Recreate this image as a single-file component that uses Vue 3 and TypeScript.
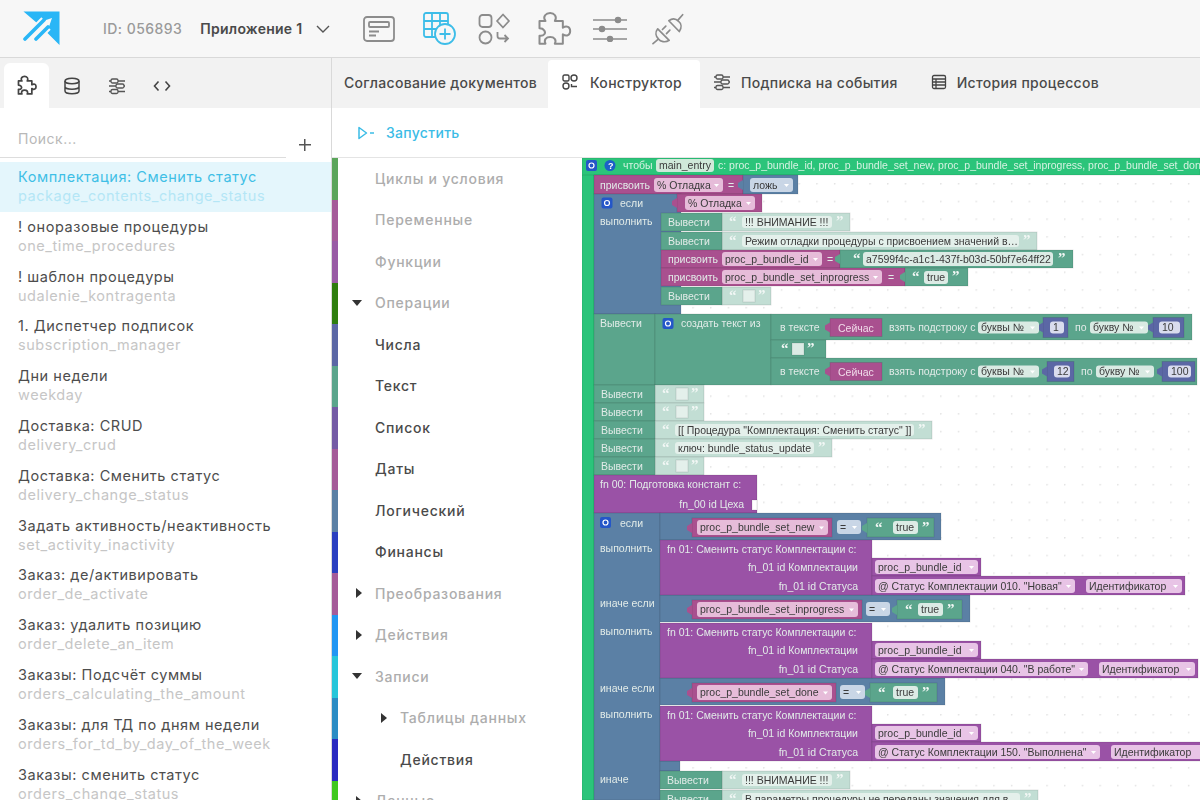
<script setup lang="ts">
type Box = { x: number; y: number; w: number; h: number; c: string }
type Field = { x: number; y: number; w: number; h: number; c: string; t: string; arrow: string }
type Label = { x: number; y: number; t: string; c: string; end?: boolean; q?: boolean }

const HAT = '#2bc47a', B = '#5b80a5', P = '#a9508f', T = '#5ba58c', F = '#9a52a6', N = '#5b67a5', L = '#c2ded4'
const W = '#e2ebe8'

const boxes: Box[] = []
const fields: Field[] = []
const labels: Label[] = []
const tabs: { x: number; y: number; c: string }[] = []

const box = (x: number, y: number, x2: number, y2: number, c: string) => boxes.push({ x, y, w: x2 - x, h: y2 - y, c })
const field = (x: number, y: number, x2: number, y2: number, c: string, t: string, arrow = '#ffffff') =>
  fields.push({ x, y, w: x2 - x, h: y2 - y, c, t, arrow })
const text = (x: number, y: number, t: string, c = W, end = false) => labels.push({ x, y, t, c, end })
const quote = (x: number, y: number, t: string) => labels.push({ x, y, t, c: '#f2f7f5', q: true })

// hat block and side rail
box(582, 158, 594, 800, HAT)
box(582, 158, 1200, 175, HAT)
text(623, 168.5, 'чтобы', '#d6f2e2')
field(656, 159, 714, 172, '#cfe9d9', 'main_entry', '')
text(718, 168.5, 'с: proc_p_bundle_id, proc_p_bundle_set_new, proc_p_bundle_set_inprogress, proc_p_bundle_set_done', '#d6f2e2')

// assign debug flag
box(594, 175, 743, 194, P)
box(743, 175, 798, 194, B)
tabs.push({ x: 743, y: 180, c: B })
text(600, 188.5, 'присвоить')
field(654, 178, 723, 192, '#e6bcd9', '% Отладка')
text(728, 188.5, '=')
field(750, 178, 793, 192, '#c9d6e6', 'ложь')

// if debug
box(594, 194, 681, 314, B)
box(677, 194, 762, 212, P)
tabs.push({ x: 677, y: 198, c: P })
text(620, 206.5, 'если')
field(685, 196, 755, 210, '#e6bcd9', '% Отладка')
text(600, 225, 'выполнить')

const vyv = (y: number, x2: number, t: string, x1 = 661, lx = 722) => {
  box(lx, y, x2, y + 18, L)
  box(x1, y, lx, y + 18, T)
  text(x1 + 7, y + 12.5, 'Вывести')
  quote(lx + 7, y + 13, '“')
  if (t) {
    field(lx + 20, y + 3, x2 - 18, y + 15, '#e4f0eb', t, '')
    quote(x2 - 14, y + 13, '”')
  } else {
    box(lx + 21, y + 3, lx + 33, y + 15, '#e4f0eb')
    quote(lx + 36, y + 13, '”')
  }
}
vyv(213, 850, '!!! ВНИМАНИЕ !!!')
vyv(232, 1037, 'Режим отладки процедуры с присвоением значений в…')
box(661, 250, 840, 268, P)
box(840, 250, 1073, 268, T)
tabs.push({ x: 840, y: 254, c: T })
text(668, 262.5, 'присвоить')
field(722, 252, 822, 266, '#e6bcd9', 'proc_p_bundle_id')
text(827, 262.5, '=')
quote(853, 263, '“')
field(863, 252, 1053, 266, '#dcebe5', 'a7599f4c-a1c1-437f-b03d-50bf7e64ff22', '')
quote(1058, 263, '”')
box(661, 268, 905, 286, P)
box(905, 268, 968, 286, T)
tabs.push({ x: 905, y: 272, c: T })
text(668, 280.5, 'присвоить')
field(722, 270, 882, 284, '#e6bcd9', 'proc_p_bundle_set_inprogress')
text(888, 280.5, '=')
quote(912, 281, '“')
field(924, 271, 948, 284, '#dcebe5', 'true', '')
quote(952, 281, '”')
vyv(287, 771, '')

// build text block
box(594, 314, 655, 385, T)
box(655, 314, 771, 385, T)
box(771, 314, 1192, 340, T)
box(771, 340, 826, 358, T)
box(771, 358, 1197, 385, T)
text(600, 327, 'Вывести')
text(681, 327, 'создать текст из')
const sub = (y: number, a: number, b: number, one: string, po: number, c: number, d: number, e: number, f: number, two: string) => {
  text(780, y + 3.5, 'в тексте')
  box(830, y - 9, 882, y + 9, P)
  tabs.push({ x: 830, y: y - 5, c: P })
  text(838, y + 4, 'Сейчас', '#f1dbea')
  text(889, y + 3.5, 'взять подстроку с')
  field(978, y - 6, 1039, y + 6, '#d9eae3', 'буквы №')
  box(a, y - 10, b, y + 10, N)
  tabs.push({ x: a, y: y - 5, c: N })
  field(a + 7, y - 6, b - 4, y + 6, '#d9dcee', one, '')
  text(po, y + 3.5, 'по')
  field(c, y - 6, d, y + 6, '#d9eae3', 'букву №')
  box(e, y - 10, f, y + 10, N)
  tabs.push({ x: e, y: y - 5, c: N })
  field(e + 6, y - 6, f - 4, y + 6, '#d9dcee', two, '')
}
sub(327.5, 1043, 1068, '1', 1075, 1090, 1148, 1153, 1184, '10')
sub(371.5, 1047, 1074, '12', 1081, 1096, 1154, 1162, 1195, '100')
quote(781, 353, '“')
box(792, 343, 804, 355, '#dcebe5')
quote(807, 353, '”')

vyv(385, 704, '', 594, 655)
vyv(403, 704, '', 594, 655)
vyv(421, 932, '[[ Процедура "Комплектация: Сменить статус" ]]', 594, 655)
vyv(439, 832, 'ключ: bundle_status_update', 594, 655)
vyv(457, 704, '', 594, 655)

box(594, 475, 757, 513, F)
text(600, 488, 'fn 00: Подготовка констант   с:')
text(744, 507.5, 'fn_00 id Цеха', W, true)
box(752, 500, 757, 510, '#ffffff')

// second if chain
box(594, 513, 660, 800, B)
box(660, 761, 680, 771, B)

const cond = (y: number, end: number, pend: number, name: string, e1: number, e2: number, g1: number, g2: number, t1: number) => {
  box(660, y, end, y + 27, B)
  box(692, y + 5, pend, y + 24, P)
  tabs.push({ x: 692, y: y + 10, c: P })
  field(697, y + 7, pend - 4, y + 22, '#e6bcd9', name)
  field(e1, y + 7, e2, y + 21, '#c9d6e6', '=')
  box(g1, y + 5, g2, y + 24, T)
  tabs.push({ x: g1, y: y + 10, c: T })
  quote(g1 + 8, y + 19, '“')
  field(t1, y + 8, t1 + 25, y + 21, '#dcebe5', 'true', '')
  quote(t1 + 29, y + 19, '”')
}
text(620, 526.5, 'если')
cond(513, 941, 832, 'proc_p_bundle_set_new', 837, 861, 867, 934, 893)
text(600, 606.5, 'иначе если')
cond(595, 970, 862, 'proc_p_bundle_set_inprogress', 866, 890, 897, 962, 918)
text(600, 692, 'иначе если')
cond(678, 945, 836, 'proc_p_bundle_set_done', 840, 865, 870, 937, 893)

const fn = (y: number, x3: number, status: string, sEnd: number, idA: number, idB: number) => {
  box(660, y, 872, y + 55, F)
  box(872, y + 18, 981, y + 36, F)
  box(872, y + 36, x3, y + 55, F)
  text(667, y + 12.5, 'fn 01: Сменить статус Комплектации   с:')
  text(858, y + 31, 'fn_01 id Комплектации', W, true)
  text(858, y + 49.5, 'fn_01 id Статуса', W, true)
  field(875, y + 20, 978, y + 34, '#e8c4e6', 'proc_p_bundle_id')
  field(875, y + 39, sEnd, y + 53, '#e8c4e6', status)
  field(idA, y + 39, idB, y + 53, '#e8c4e6', 'Идентификатор')
  text(600, y + 12, 'выполнить')
}
fn(540, 1185, '@ Статус Комплектации 010. "Новая"', 1075, 1086, 1182)
fn(623, 1198, '@ Статус Комплектации 040. "В работе"', 1088, 1099, 1195)
fn(706, 1210, '@ Статус Комплектации 150. "Выполнена"', 1100, 1111, 1212)

text(600, 783, 'иначе')
vyv(771, 850, '!!! ВНИМАНИЕ !!!', 660, 722)
vyv(790, 1038, 'В параметры процедуры не переданы значения для в…', 660, 722)

const list = [
  ['Комплектация: Сменить статус', 'package_contents_change_status'],
  ['! оноразовые процедуры', 'one_time_procedures'],
  ['! шаблон процедуры', 'udalenie_kontragenta'],
  ['1. Диспетчер подписок', 'subscription_manager'],
  ['Дни недели', 'weekday'],
  ['Доставка: CRUD', 'delivery_crud'],
  ['Доставка: Сменить статус', 'delivery_change_status'],
  ['Задать активность/неактивность', 'set_activity_inactivity'],
  ['Заказ: де/активировать', 'order_de_activate'],
  ['Заказ: удалить позицию', 'order_delete_an_item'],
  ['Заказы: Подсчёт суммы', 'orders_calculating_the_amount'],
  ['Заказы: для ТД по дням недели', 'orders_for_td_by_day_of_the_week'],
  ['Заказы: сменить статус', 'orders_change_status'],
]

const toolbox = [
  { t: 'Циклы и условия', c: '#5ba55b', leaf: false, caret: '', sub: false },
  { t: 'Переменные', c: '#a55b99', leaf: false, caret: '', sub: false },
  { t: 'Функции', c: '#995ba5', leaf: false, caret: '', sub: false },
  { t: 'Операции', c: '#2e7d0e', leaf: false, caret: 'down', sub: false },
  { t: 'Числа', c: '#5b67a5', leaf: true, caret: '', sub: false },
  { t: 'Текст', c: '#5ba58c', leaf: true, caret: '', sub: false },
  { t: 'Список', c: '#745ba5', leaf: true, caret: '', sub: false },
  { t: 'Даты', c: '#a55b99', leaf: true, caret: '', sub: false },
  { t: 'Логический', c: '#5b80a5', leaf: true, caret: '', sub: false },
  { t: 'Финансы', c: '#2a3fc0', leaf: true, caret: '', sub: false },
  { t: 'Преобразования', c: '#a55b99', leaf: false, caret: 'right', sub: false },
  { t: 'Действия', c: '#2196f3', leaf: false, caret: 'right', sub: false },
  { t: 'Записи', c: '#26c6da', leaf: false, caret: 'down', sub: false },
  { t: 'Таблицы данных', c: '#2b8cc4', leaf: false, caret: 'right', sub: true },
  { t: 'Действия', c: '#2a2ac0', leaf: true, caret: '', sub: true },
  { t: 'Данные', c: '#3fc81f', leaf: false, caret: 'right', sub: false },
]

const puzzle =
  'M616 62 C606 48 618 38 630 38 C642 38 652 48 644 62 H668 V82 C680 74 690 80 690 92 C690 104 680 110 668 102 V130 H644 C650 118 642 110 630 110 C618 110 610 118 616 130 H598 V106 C612 108 618 98 612 90 C608 84 604 84 598 84 V62 Z'
</script>

<template>
  <div class="app">
    <header class="top">
      <svg class="logo" viewBox="0 0 37 35" width="37" height="35">
        <path d="M0.500 0.500H36.500V34L24 21.500L29 7L14 12Z" fill="#29b6f6" />
        <path d="M2 28L21 9M13 28L25 16" stroke="#f7f7f7" stroke-width="7.500" />
        <path d="M2 28L21 9M13 28L25 16" stroke="#29b6f6" stroke-width="3.600" stroke-linecap="round" />
      </svg>
      <span class="app-id">ID: 056893</span>
      <span class="app-name">Приложение 1</span>
      <svg class="chev" viewBox="0 0 14 8" width="14" height="8"><path d="M1 1L7 7L13 1" fill="none" stroke="#555" stroke-width="1.400" /></svg>
      <div class="tools">
        <svg viewBox="0 0 32 26" width="32" height="26" fill="none" stroke="#8c8c8c" stroke-width="1.800">
          <rect x="1" y="1" width="30" height="24" rx="3" />
          <rect x="6" y="6" width="20" height="5" rx="1" />
          <path d="M6 15.500H16M6 19.500H13" />
        </svg>
        <svg viewBox="0 0 34 34" width="34" height="34" fill="none" stroke="#3dbde8" stroke-width="1.800">
          <rect x="2" y="1" width="24" height="24" rx="2" />
          <path d="M10 1V25M18 1V25M2 9H26M2 17H26" />
          <circle cx="23" cy="22" r="10" fill="#f7f7f7" />
          <path d="M23 16.500V27.500M17.500 22H28.500" />
        </svg>
        <svg viewBox="0 0 32 32" width="32" height="32" fill="none" stroke="#8c8c8c" stroke-width="1.800">
          <rect x="1.500" y="2" width="12" height="12" rx="3" />
          <path d="M25 1.500L31 8L25 14.500L19 8Z" stroke-linejoin="round" />
          <circle cx="7.500" cy="24.500" r="6" />
          <path d="M19.500 19V23C19.500 25 20.500 25.500 22 25.500H30M26.500 22L30 25.500L26.500 29" />
        </svg>
        <svg viewBox="585 32 110 108" width="37" height="36" fill="none" stroke="#8c8c8c" stroke-width="6" stroke-linejoin="round">
          <path :d="puzzle" />
        </svg>
        <svg viewBox="0 0 34 26" width="34" height="26" stroke="#8c8c8c" stroke-width="1.500">
          <path d="M0 4H34M0 13H34M0 23H34" />
          <circle cx="25" cy="4" r="2.500" fill="#8c8c8c" />
          <circle cx="9" cy="13" r="2.500" fill="#8c8c8c" />
          <circle cx="17" cy="23" r="2.500" fill="#8c8c8c" />
        </svg>
        <svg viewBox="25 15 95 95" width="32" height="32" fill="none" stroke="#8c8c8c" stroke-width="5" stroke-linejoin="round" stroke-linecap="round">
          <path d="M75 38L106 70C114 58 112 46 104 40C96 32 86 30 75 38Z" />
          <path d="M102 36L116 20" />
          <path d="M42 62L76 96C64 104 50 100 44 92C36 84 34 72 42 62Z" />
          <path d="M42 94L28 106" />
          <path d="M56 64L66 54M68 76L78 66" />
        </svg>
      </div>
    </header>

    <div class="main">
      <aside class="side">
        <nav class="side-tabs">
          <div class="side-tab active">
            <svg viewBox="585 32 110 108" width="21" height="21" fill="none" stroke="#444" stroke-width="9" stroke-linejoin="round"><path :d="puzzle" /></svg>
          </div>
          <div class="side-tab">
            <svg viewBox="0 0 18 18" width="18" height="18" fill="none" stroke="#444" stroke-width="1.500">
              <ellipse cx="9" cy="4" rx="7" ry="2.800" />
              <path d="M2 4V14C2 15.500 5 16.800 9 16.800S16 15.500 16 14V4M2 9.500C2 11 5 12.300 9 12.300S16 11 16 9.500" />
            </svg>
          </div>
          <div class="side-tab">
            <svg viewBox="0 0 18 18" width="18" height="18" fill="none" stroke="#555" stroke-width="1.300">
              <path d="M1 4H17M1 9H17M1 14.500H17" />
              <rect x="3" y="2" width="7" height="4" rx="1.500" fill="#f2f2f2" />
              <rect x="8" y="7" width="8" height="4" rx="1.500" fill="#f2f2f2" />
              <rect x="3" y="12.500" width="7" height="4" rx="1.500" fill="#f2f2f2" />
            </svg>
          </div>
          <div class="side-tab">
            <svg viewBox="0 0 18 12" width="18" height="12" fill="none" stroke="#444" stroke-width="1.600"><path d="M5.500 1.500L1.500 6L5.500 10.500M12.500 1.500L16.500 6L12.500 10.500" /></svg>
          </div>
        </nav>
        <div class="search">
          <span class="search-input">Поиск...</span>
          <span class="plus"></span>
        </div>
        <ul class="procs">
          <li v-for="(p, i) in list" :key="p[1]" class="proc" :class="{ sel: i === 0 }">
            <span class="proc-name">{{ p[0] }}</span>
            <span class="proc-code">{{ p[1] }}</span>
          </li>
        </ul>
      </aside>

      <section class="work">
        <nav class="tabs">
          <div class="tab first">Согласование документов</div>
          <div class="tab active">
            <svg viewBox="0 0 16 16" width="16" height="16" fill="none" stroke="#444" stroke-width="1.400">
              <rect x="1" y="1" width="6" height="6" rx="1.500" />
              <circle cx="12" cy="4" r="3" />
              <circle cx="4" cy="12" r="3" />
              <path d="M9.500 10V12.500H15" />
            </svg>
            Конструктор
          </div>
          <div class="tab events">
            <svg viewBox="0 0 18 18" width="18" height="18" fill="none" stroke="#555" stroke-width="1.300">
              <path d="M1 4H17M1 9H17M1 14.500H17" />
              <rect x="3" y="2" width="7" height="4" rx="1.500" fill="#f2f2f2" />
              <rect x="8" y="7" width="8" height="4" rx="1.500" fill="#f2f2f2" />
              <rect x="3" y="12.500" width="7" height="4" rx="1.500" fill="#f2f2f2" />
            </svg>
            Подписка на события
          </div>
          <div class="tab history">
            <svg viewBox="0 0 16 16" width="16" height="16" fill="none" stroke="#444" stroke-width="1.300">
              <rect x="1.500" y="1.500" width="13" height="13" rx="1.500" />
              <path d="M1.500 5H14.500M1.500 8H14.500M1.500 11H14.500M5 5V14.500" />
            </svg>
            История процессов
          </div>
        </nav>
        <div class="runbar">
          <svg viewBox="0 0 18 14" width="18" height="14" fill="none" stroke="#3bbce6" stroke-width="1.500">
            <path d="M2 1.500L9.500 7L2 12.500Z" stroke-linejoin="round" />
            <path d="M13 7H17" />
          </svg>
          <span>Запустить</span>
        </div>
        <div class="editor">
          <ul class="toolbox">
            <li v-for="(c, i) in toolbox" :key="i" class="cat" :class="{ leaf: c.leaf, nested: c.sub }" :style="{ borderLeftColor: c.c }">
              <i v-if="c.caret" class="caret" :class="c.caret"></i>
              {{ c.t }}
            </li>
          </ul>
          <svg class="canvas" viewBox="582 158 618 642" width="618" height="642">
            <defs>
              <pattern id="dots" x="887" y="183" width="17.700" height="17.700" patternUnits="userSpaceOnUse">
                <circle cx="0.800" cy="0.800" r="0.800" fill="#dcdcdc" />
              </pattern>
            </defs>
            <rect x="582" y="158" width="618" height="642" fill="url(#dots)" />
            <g class="shapes">
              <rect v-for="(b, i) in boxes" :key="'b' + i" :x="b.x" :y="b.y" :width="b.w" :height="b.h" :fill="b.c" stroke="#000" stroke-opacity="0.100" stroke-width="1" />
              <polygon v-for="(t, i) in tabs" :key="'t' + i" :points="`${t.x},${t.y} ${t.x - 5},${t.y + 3} ${t.x - 5},${t.y + 7} ${t.x},${t.y + 10}`" :fill="t.c" />
            </g>
            <rect x="586" y="160" width="11" height="11" rx="2" fill="#2456c8" />
            <circle cx="591.500" cy="165.500" r="2.500" fill="none" stroke="#fff" stroke-width="1.200" />
            <circle cx="610" cy="165.500" r="5.500" fill="#1c60c8" />
            <text x="608" y="168.500" class="tiny">?</text>
            <rect x="601.500" y="197.500" width="11" height="11" rx="2" fill="#2456c8" />
            <circle cx="607" cy="203" r="2.500" fill="none" stroke="#fff" stroke-width="1.200" />
            <rect x="662.500" y="318" width="11" height="11" rx="2" fill="#2456c8" />
            <circle cx="668" cy="323.500" r="2.500" fill="none" stroke="#fff" stroke-width="1.200" />
            <rect x="600" y="517" width="11" height="11" rx="2" fill="#2456c8" />
            <circle cx="605.500" cy="522.500" r="2.500" fill="none" stroke="#fff" stroke-width="1.200" />
            <g v-for="(f, i) in fields" :key="'f' + i">
              <rect :x="f.x" :y="f.y" :width="f.w" :height="f.h" rx="3" :fill="f.c" />
              <text :x="f.x + 3" :y="f.y + f.h / 2 + 3.500" class="fld">{{ f.t }}</text>
              <polygon v-if="f.arrow" :points="`${f.x + f.w - 9},${f.y + f.h / 2 - 1} ${f.x + f.w - 4},${f.y + f.h / 2 - 1} ${f.x + f.w - 6.500},${f.y + f.h / 2 + 2}`" :fill="f.arrow" />
            </g>
            <text v-for="(l, i) in labels" :key="'l' + i" :x="l.x" :y="l.y" :class="l.q ? 'qt' : 'lbl'" :fill="l.c" :text-anchor="l.end ? 'end' : 'start'">{{ l.t }}</text>
          </svg>
        </div>
      </section>
    </div>
  </div>
</template>

<style scoped>
.app {
  width: 1200px;
  height: 800px;
  overflow: hidden;
  background: #fff;
  font-family: Inter, "Noto Sans", sans-serif;
  color: #444;
  display: flex;
  flex-direction: column;
}
.top {
  height: 57px;
  flex: none;
  background: #f7f7f7;
  border-bottom: 1px solid #d9d9d9;
  display: flex;
  align-items: center;
  padding-left: 23px;
  box-sizing: content-box;
}
.logo { flex: none; }
.app-id {
  margin-left: 43px;
  font-size: 14px;
  letter-spacing: 0.45px;
  color: #9a9a9a;
  font-weight: 500;
}
.app-name {
  margin-left: 18px;
  font-size: 14px;
  font-weight: 600;
  letter-spacing: 0.25px;
  color: #4a4a4a;
}
.chev { margin-left: 14px; }
.tools {
  margin-left: 33px;
  display: flex;
  align-items: center;
}
.tools svg:nth-child(2) { margin-left: 27px; }
.tools svg:nth-child(3) { margin-left: 22px; }
.tools svg:nth-child(4) { margin-left: 25px; }
.tools svg:nth-child(5) { margin-left: 21px; }
.tools svg:nth-child(6) { margin-left: 25px; }
.main {
  flex: 1;
  display: flex;
  min-height: 0;
}
.side {
  width: 331px;
  flex: none;
  border-right: 1px solid #d9d9d9;
  display: flex;
  flex-direction: column;
  overflow: hidden;
}
.side-tabs {
  height: 50px;
  flex: none;
  background: #f2f2f2;
  display: flex;
  padding: 5px 0 0 4px;
  box-sizing: border-box;
}
.side-tab {
  width: 45px;
  display: flex;
  align-items: center;
  justify-content: center;
  border-radius: 6px 6px 0 0;
}
.side-tab.active { background: #fff; }
.search {
  height: 54px;
  flex: none;
  display: flex;
  position: relative;
}
.search-input {
  width: 286px;
  height: 50px;
  box-sizing: border-box;
  padding: 22px 0 0 18px;
  border-bottom: 1px solid #ddd;
  font-size: 14px;
  color: #b8b8b8;
  line-height: 17px;
  letter-spacing: 0.5px;
}
.plus {
  position: absolute;
  left: 299px;
  top: 31px;
  width: 12px;
  height: 12px;
  background:
    linear-gradient(#555, #555) center / 12px 1.500px no-repeat,
    linear-gradient(#555, #555) center / 1.500px 12px no-repeat;
}
.procs {
  list-style: none;
  margin: 0;
  padding: 0;
}
.proc {
  height: 49.800px;
  box-sizing: border-box;
  padding: 6px 18px 0;
  display: flex;
  flex-direction: column;
}
.proc.sel { background: #e4f6fc; }
.proc-name {
  font-size: 14.500px;
  line-height: 18px;
  letter-spacing: 0.55px;
  color: #4d4d4d;
  white-space: nowrap;
}
.proc-code {
  font-size: 14.500px;
  line-height: 18px;
  margin-top: 1px;
  letter-spacing: 0.55px;
  color: #c6c6c6;
  white-space: nowrap;
}
.sel .proc-name { color: #3fbfe6; }
.sel .proc-code { color: #b4e6f6; }
.work {
  flex: 1;
  min-width: 0;
  display: flex;
  flex-direction: column;
}
.tabs {
  height: 50px;
  flex: none;
  background: #f2f2f2;
  display: flex;
  font-size: 14px;
  letter-spacing: 0.3px;
  color: #4a4a4a;
  font-weight: 500;
}
.tab {
  display: flex;
  align-items: center;
  padding-bottom: 4px;
  white-space: nowrap;
  height: 48px;
  margin-top: 2px;
  box-sizing: border-box;
}
.tab.first { padding-left: 12px; width: 216px; }
.tab.active {
  background: #fff;
  border-radius: 4px 4px 0 0;
  padding-left: 14px;
  width: 152px;
  gap: 12px;
  flex: none;
}
.tab.events { padding-left: 13px; gap: 10px; }
.tab.history { padding-left: 33px; gap: 10px; }
.runbar {
  height: 50px;
  flex: none;
  display: flex;
  align-items: center;
  gap: 11px;
  padding-left: 25px;
  border-bottom: 1px solid #e4e4e4;
  box-sizing: border-box;
  color: #3bbce6;
  font-size: 14px;
  font-weight: 500;
  letter-spacing: 0.3px;
}
.editor {
  flex: 1;
  display: flex;
  min-height: 0;
  overflow: hidden;
}
.toolbox {
  width: 250px;
  flex: none;
  list-style: none;
  margin: 0;
  padding: 0;
  background: #fff;
}
.cat {
  height: 41.500px;
  box-sizing: border-box;
  border-left: 6px solid;
  padding-left: 37px;
  padding-bottom: 1px;
  display: flex;
  align-items: center;
  position: relative;
  font-size: 14px;
  letter-spacing: 0.75px;
  color: #adadad;
  font-weight: 500;
}
.cat.leaf { color: #4a4a4a; }
.cat.nested { padding-left: 62px; }
.caret {
  position: absolute;
  width: 0;
  height: 0;
}
.caret.down {
  left: 14px;
  top: 17px;
  border-left: 5px solid transparent;
  border-right: 5px solid transparent;
  border-top: 6px solid #333;
}
.caret.right {
  left: 18px;
  top: 15px;
  border-top: 5px solid transparent;
  border-bottom: 5px solid transparent;
  border-left: 6px solid #333;
}
.nested .caret.right { left: 43px; }
.canvas {
  flex: none;
  display: block;
  filter: blur(0.5px);
}
.lbl, .fld, .tiny {
  font-family: "Liberation Sans", Arial, sans-serif;
  font-size: 10.500px;
}
.fld { fill: #3a3a3a; }
.tiny { fill: #fff; font-weight: 700; font-size: 9px; }
.qt {
  font-family: "Liberation Serif", serif;
  font-size: 15px;
  font-weight: 700;
}
</style>
